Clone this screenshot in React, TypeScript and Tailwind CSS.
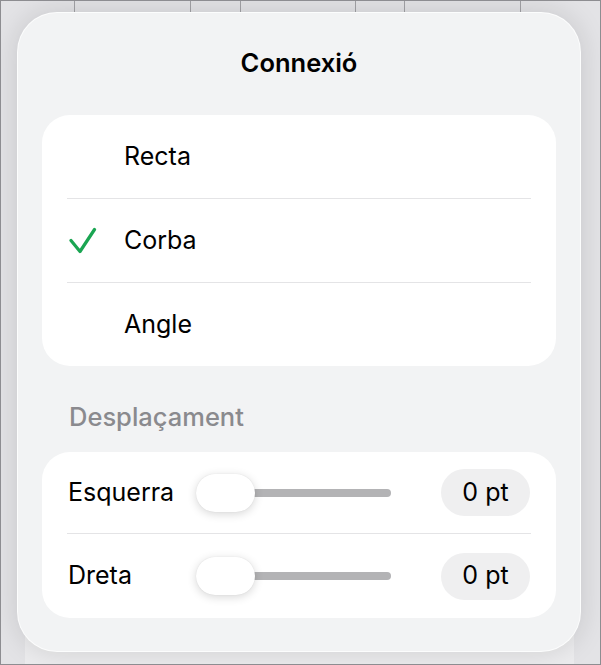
import React from "react";

const font = { fontFamily: "Inter, 'Noto Sans', 'Liberation Sans', sans-serif" };

function Check() {
  return (
    <svg width="28" height="28" viewBox="0 0 28 28" className="shrink-0">
      <path d="M2 13.5 L11 24.5 L25.5 2.5" fill="none" stroke="#1aa552" strokeWidth="3.2" strokeLinecap="round" strokeLinejoin="round" />
    </svg>
  );
}

function OptionRow({ label, checked }: { label: string; checked?: boolean }) {
  return (
    <div className="flex h-[83px] items-center">
      <div className="w-[82px] pl-[27px] flex items-center">{checked ? <Check /> : null}</div>
      <span className="text-[25px] text-black">{label}</span>
    </div>
  );
}

function SliderRow({ label }: { label: string }) {
  return (
    <div className="flex h-full items-center px-[26px]">
      <span className="w-[128px] text-[25px] text-black">{label}</span>
      <div className="relative flex h-[38px] w-[195px] items-center">
        <div className="ml-[30px] h-[8px] flex-1 rounded-full bg-[#b3b3b5]" />
        <div className="absolute left-0 top-0 h-[38px] w-[59px] rounded-full bg-white shadow-[0_2px_10px_rgba(0,0,0,0.16),0_0_1px_rgba(0,0,0,0.12)]" />
      </div>
      <div className="ml-auto flex h-[47px] w-[89px] items-center justify-center rounded-full bg-[#efeff0] text-[25px] text-black">
        0 pt
      </div>
    </div>
  );
}

export default function App() {
  const lines = [73, 189, 239, 354, 403, 519];
  return (
    <div className="relative h-[665px] w-[601px] overflow-hidden border border-[#8d8d91] bg-[#e3e3e6]" style={font}>
      {/* background canvas */}
      <div className="absolute inset-0">
        {lines.map((x) => (
          <div key={x} className="absolute top-0 h-[14px] w-px bg-[#a2a2a6]" style={{ left: x }} />
        ))}
        <div className="absolute bottom-0 left-[24px] right-[26px] top-[560px] bg-[#ececee]" />
      </div>

      {/* popover */}
      <div className="absolute left-[16px] top-[11px] flex h-[640px] w-[564px] flex-col rounded-[40px] border border-white/80 bg-[#f2f3f4] px-[24px] shadow-[0_0_28px_rgba(0,0,0,0.13)]">
        <div className="pt-[34px] text-center text-[25.5px] font-semibold leading-[32px] text-black">Connexió</div>

        <div className="mt-[36px] flex flex-col rounded-[28px] bg-white">
          <OptionRow label="Recta" />
          <div className="mx-[25px] h-px bg-[#e4e4e6]" />
          <OptionRow label="Corba" checked />
          <div className="mx-[25px] h-px bg-[#e4e4e6]" />
          <OptionRow label="Angle" />
        </div>

        <div className="mt-[36px] pl-[27px] text-[25.5px] font-medium leading-[30px] text-[#8a8a8e]">Desplaçament</div>

        <div className="mt-[20px] flex flex-col rounded-[28px] bg-white">
          <div className="h-[81px]">
            <SliderRow label="Esquerra" />
          </div>
          <div className="mx-[25px] h-px bg-[#e4e4e6]" />
          <div className="h-[84px]">
            <SliderRow label="Dreta" />
          </div>
        </div>
      </div>
    </div>
  );
}
